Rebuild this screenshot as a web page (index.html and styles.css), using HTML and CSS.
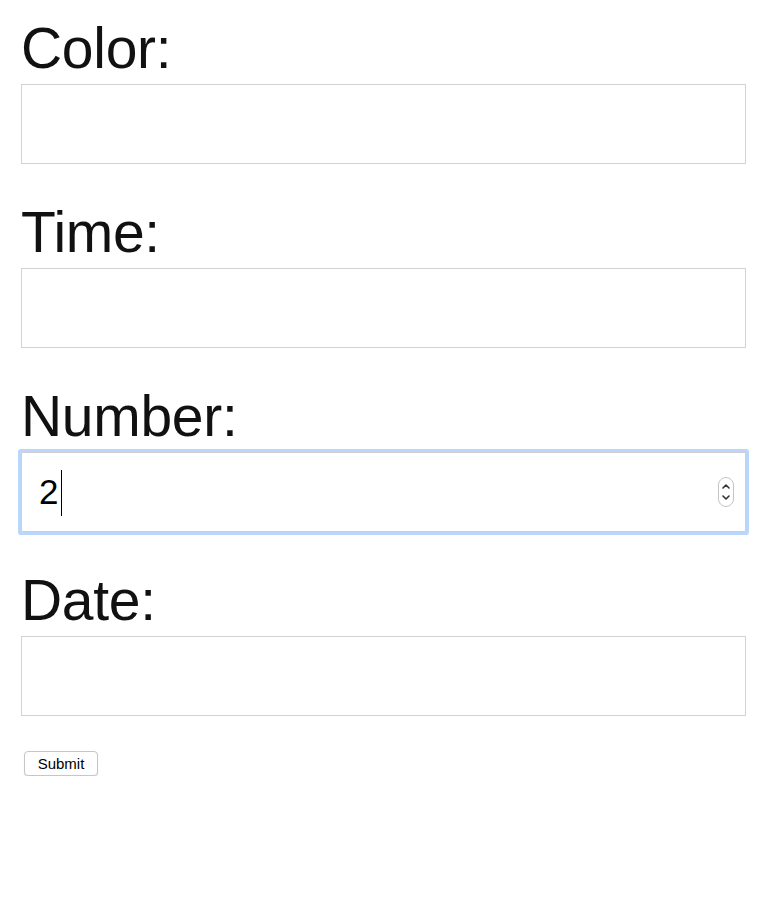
FILE: index.html
```html
<!DOCTYPE html>
<html lang="en">
<head>
<meta charset="utf-8">
<title>Form</title>
<link rel="stylesheet" href="styles.css">
</head>
<body>
<form class="form">
  <div class="field">
    <label class="label" for="color">Color:</label>
    <input class="input" id="color" type="text">
  </div>
  <div class="field">
    <label class="label" for="time">Time:</label>
    <input class="input" id="time" type="text">
  </div>
  <div class="field">
    <label class="label" for="number">Number:</label>
    <div class="input-wrap">
      <input class="input input-number" id="number" type="number" value="2">
      <span class="caret"></span>
      <span class="spinner" aria-hidden="true">
        <svg width="16" height="30" viewBox="0 0 16 30">
          <rect x="0.5" y="0.5" width="15" height="29" rx="7.5" fill="#fff" stroke="#c4c4c4"/>
          <path d="M5 11 L8 8 L11 11" fill="none" stroke="#333" stroke-width="1.6" stroke-linecap="round" stroke-linejoin="round"/>
          <path d="M5 19 L8 22 L11 19" fill="none" stroke="#333" stroke-width="1.6" stroke-linecap="round" stroke-linejoin="round"/>
        </svg>
      </span>
    </div>
  </div>
  <div class="field">
    <label class="label" for="date">Date:</label>
    <input class="input" id="date" type="text">
  </div>
  <button class="submit" type="submit">Submit</button>
</form>
</body>
</html>
```

FILE: styles.css
```css
html, body {
  margin: 0;
  padding: 0;
  background: #fff;
}

body {
  font-family: "Liberation Sans", Arial, sans-serif;
  color: #000;
}

.form {
  display: flex;
  flex-direction: column;
  align-items: flex-start;
  padding: 15px 22px 0 21px;
}

.field {
  display: flex;
  flex-direction: column;
  width: 100%;
  margin-bottom: 35px;
}

.label {
  display: block;
  font-size: 57px;
  line-height: 66px;
  height: 66px;
  margin-bottom: 3px;
  letter-spacing: -0.3px;
  color: #111;
}

.input-wrap {
  position: relative;
  width: 100%;
}

.input {
  box-sizing: border-box;
  display: block;
  width: 100%;
  height: 80px;
  margin: 0;
  border: 1px solid #d2d2d2;
  border-radius: 0;
  background: #fff;
  outline: none;
  padding: 0 17px;
  font-family: "Liberation Sans", Arial, sans-serif;
  font-size: 35px;
  color: #000;
}

.input-number {
  border-color: #cfcfcf;
  box-shadow: 0 0 0 3px #bad7fb;
  border-radius: 1px;
  -moz-appearance: textfield;
  appearance: textfield;
  caret-color: transparent;
}

.input-number::-webkit-inner-spin-button,
.input-number::-webkit-outer-spin-button {
  -webkit-appearance: none;
  margin: 0;
}

.caret {
  position: absolute;
  left: 40px;
  top: 18px;
  width: 1px;
  height: 46px;
  background: #000;
}

.spinner {
  position: absolute;
  right: 12px;
  top: 25px;
  width: 16px;
  height: 30px;
  display: flex;
}

.submit {
  margin: 0 0 0 3px;
  height: 25px;
  width: 74px;
  padding: 0;
  box-sizing: border-box;
  border: 1px solid #c6c6c6;
  border-radius: 4px;
  background: #fff;
  box-shadow: 0 1px 1px rgba(0, 0, 0, 0.12);
  font-family: "Liberation Sans", Arial, sans-serif;
  font-size: 15px;
  color: #000;
}
```
